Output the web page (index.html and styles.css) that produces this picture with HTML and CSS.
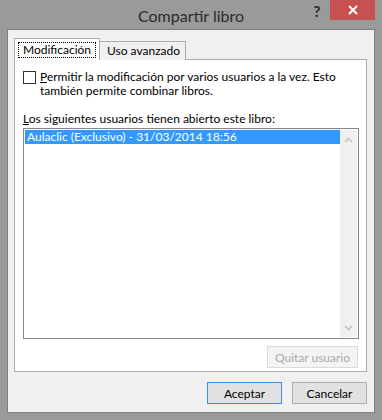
FILE: index.html
```html
<!DOCTYPE html>
<html lang="es">
<head>
  <meta charset="UTF-8">
  <title>Compartir libro</title>
  <link rel="stylesheet" href="styles.css">
</head>
<body>
  <div class="window">
    <div class="titlebar">
      <span></span>
      <span class="title">Compartir libro</span>
      <div class="controls">
        <span class="help">?</span>
        <span class="close">
          <svg width="12" height="10" viewBox="0 0 12 10"><path d="M2 1 L10 9 M10 1 L2 9" stroke="#fff" stroke-width="2"/></svg>
        </span>
      </div>
    </div>

    <div class="client">
      <div class="tabs">
        <div class="tab active"><span class="focus">Modificación</span></div>
        <div class="tab">Uso avanzado</div>
      </div>

      <div class="panel">
        <label class="check-row">
          <span class="checkbox"></span>
          <span class="check-text">Permitir la modificación por varios usuarios a la vez. Esto también permite combinar libros.</span>
        </label>

        <div class="list-label">Los siguientes usuarios tienen abierto este libro:</div>

        <div class="listbox">
          <div class="items">
            <div class="item selected">Aulaclic (Exclusivo) - 31/03/2014 18:56</div>
          </div>
          <div class="scrollbar">
            <svg width="9" height="6" viewBox="0 0 9 6"><path d="M1 5 L4.5 1.5 L8 5" fill="none" stroke="#c2c2c2" stroke-width="1.6"/></svg>
            <svg width="9" height="6" viewBox="0 0 9 6"><path d="M1 1 L4.5 4.5 L8 1" fill="none" stroke="#c2c2c2" stroke-width="1.6"/></svg>
          </div>
        </div>

        <div class="panel-actions">
          <button class="btn" disabled>Quitar usuario</button>
        </div>
      </div>

      <div class="dialog-actions">
        <button class="btn default">Aceptar</button>
        <button class="btn">Cancelar</button>
      </div>
    </div>
  </div>
</body>
</html>
```

FILE: styles.css
```css
* {
  box-sizing: border-box;
}

body {
  margin: 0;
  background-color: #9a9a9a;
  font-family: Lato, 'Noto Sans', sans-serif;
  font-size: 12px;
  color: #000;
}

.window {
  width: 382px;
  height: 420px;
  display: flex;
  flex-direction: column;
}

.titlebar {
  height: 29px;
  flex: none;
  display: grid;
  grid-template-columns: 1fr auto 1fr;
}

.title {
  font-size: 16px;
  color: #2a2a2a;
  line-height: 31px;
}

.controls {
  display: flex;
  justify-content: flex-end;
  align-items: flex-start;
  padding-right: 7px;
}

.help {
  width: 26px;
  height: 20px;
  text-align: center;
  font-weight: bold;
  font-size: 15px;
  line-height: 23px;
  color: #262626;
}

.close {
  width: 45px;
  height: 20px;
  background-color: #c75050;
  display: flex;
  align-items: center;
  justify-content: center;
}

.client {
  margin: 0 7px 0 7px;
  height: 384px;
  border: 1px solid #7d7d7d;
  background-color: #f0f0f0;
  padding: 8px 7px 0 6px;
  display: flex;
  flex-direction: column;
}

.tabs {
  display: flex;
  align-items: flex-end;
  height: 22px;
  flex: none;
  position: relative;
  z-index: 1;
  margin-bottom: -1px;
}

.tab {
  height: 19px;
  width: 87px;
  padding-left: 7px;
  border: 1px solid #acacac;
  border-bottom: none;
  background-color: #f0f0f0;
  line-height: 18px;
  margin-left: -1px;
}

.tab.active {
  height: 22px;
  width: 86px;
  padding: 0 3px;
  margin-left: 0;
  background-color: #fff;
}

.focus {
  display: block;
  margin-top: 3px;
  padding-left: 4px;
  height: 16px;
  line-height: 14px;
  border: 1px dotted #000;
}

.panel {
  height: 313px;
  flex: none;
  border: 1px solid #acacac;
  background-color: #fff;
  padding: 10px 7px 0 8px;
  display: flex;
  flex-direction: column;
}

/* access-key letters */
.check-text::first-letter,
.list-label::first-letter {
  text-decoration: underline;
}

.check-row {
  display: flex;
  align-items: flex-start;
  gap: 4px;
}

.checkbox {
  flex: none;
  width: 13px;
  height: 13px;
  border: 1px solid #333;
  background-color: #fff;
  margin-top: 1px;
}

.check-text {
  line-height: 14px;
  width: 300px;
}

.list-label {
  margin-top: 14px;
  line-height: 14px;
}

.listbox {
  margin-top: 2px;
  height: 211px;
  flex: none;
  border: 1px solid #828790;
  display: flex;
  padding: 1px;
}

.items {
  flex: 1;
}

.item {
  height: 14px;
  line-height: 14px;
  padding-left: 2px;
}

.item.selected {
  background-color: #3399ff;
  color: #fff;
}

.scrollbar {
  width: 17px;
  background-color: #f0f0f0;
  display: flex;
  flex-direction: column;
  justify-content: space-between;
  align-items: center;
  padding: 7px 0 6px;
}

.panel-actions {
  display: flex;
  justify-content: flex-end;
  margin-top: 7px;
  padding-right: 1px;
}

.btn {
  font-family: inherit;
  font-size: 12px;
  height: 22px;
  padding: 0;
  border: 1px solid #adadad;
  background-color: #e1e1e1;
  color: #000;
}

.panel-actions .btn {
  width: 91px;
}

.btn:disabled {
  background-color: #f4f4f4;
  border-color: #dadada;
  color: #a8a8a8;
}

.dialog-actions {
  display: flex;
  justify-content: flex-end;
  gap: 10px;
  margin-top: 10px;
}

.dialog-actions .btn {
  width: 75px;
}

.btn.default {
  border-color: #3c8ee8;
}
```
